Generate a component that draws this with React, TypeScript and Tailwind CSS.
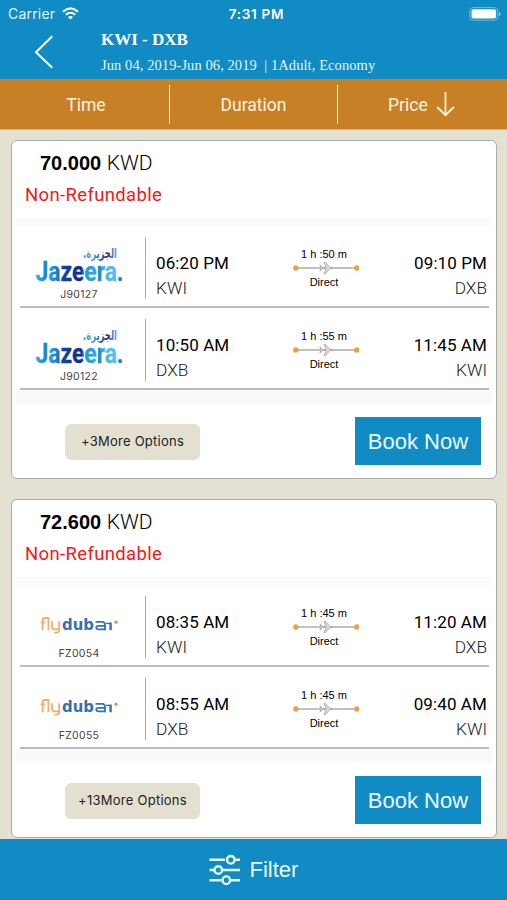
import React from 'react';

type Leg = {
    code: string;
    depTime: string;
    dep: string;
    duration: string;
    arrTime: string;
    arr: string;
};

type Offer = {
    price: string;
    airline: 'jazeera' | 'flydubai';
    options: string;
    legs: Leg[];
};

const offers: Offer[] = [
    {
        price: '70.000',
        airline: 'jazeera',
        options: '+3More Options',
        legs: [
            { code: 'J90127', depTime: '06:20 PM', dep: 'KWI', duration: '1 h :50 m', arrTime: '09:10 PM', arr: 'DXB' },
            { code: 'J90122', depTime: '10:50 AM', dep: 'DXB', duration: '1 h :55 m', arrTime: '11:45 AM', arr: 'KWI' },
        ],
    },
    {
        price: '72.600',
        airline: 'flydubai',
        options: '+13More Options',
        legs: [
            { code: 'FZ0054', depTime: '08:35 AM', dep: 'KWI', duration: '1 h :45 m', arrTime: '11:20 AM', arr: 'DXB' },
            { code: 'FZ0055', depTime: '08:55 AM', dep: 'DXB', duration: '1 h :45 m', arrTime: '09:40 AM', arr: 'KWI' },
        ],
    },
];

const JazeeraLogo = () => (
    <svg width="96" height="52" viewBox="0 0 96 52" className="overflow-visible">
        <defs>
            <linearGradient id="jz" x1="4" x2="91" y1="0" y2="0" gradientUnits="userSpaceOnUse">
                <stop offset="0" stopColor="#35b4e6" />
                <stop offset="0.12" stopColor="#1683cb" />
                <stop offset="0.16" stopColor="#2a9fdb" />
                <stop offset="0.27" stopColor="#1c6fc0" />
                <stop offset="0.3" stopColor="#11449f" />
                <stop offset="0.52" stopColor="#0f2c92" />
                <stop offset="0.55" stopColor="#2196d5" />
                <stop offset="0.68" stopColor="#34a9df" />
                <stop offset="0.72" stopColor="#1783c8" />
                <stop offset="0.79" stopColor="#4cb8e6" />
                <stop offset="0.92" stopColor="#5dc1ea" />
                <stop offset="0.95" stopColor="#1585c9" />
            </linearGradient>
            <linearGradient id="jzAr" x1="51" x2="85" y1="0" y2="0" gradientUnits="userSpaceOnUse">
                <stop offset="0" stopColor="#2c86cd" />
                <stop offset="0.25" stopColor="#55b6e4" />
                <stop offset="0.5" stopColor="#2a5fb0" />
                <stop offset="0.72" stopColor="#2b2f86" />
                <stop offset="1" stopColor="#5fb2e2" />
            </linearGradient>
        </defs>
        <text
            x="85"
            y="22.5"
            textLength="34"
            lengthAdjust="spacingAndGlyphs"
            direction="rtl"
            className="font-['DejaVu_Sans',sans-serif] text-[13.5px] font-bold"
            fill="url(#jzAr)"
        >
            الجزيرة.
        </text>
        <text
            x="3.5"
            y="45.5"
            textLength="88"
            lengthAdjust="spacingAndGlyphs"
            className="font-['Roboto',sans-serif] text-[28.5px] font-bold"
            fill="url(#jz)"
            stroke="url(#jz)"
            strokeWidth="0.3"
        >
            Jazeera.
        </text>
    </svg>
);

const FlydubaiLogo = () => (
    <svg width="96" height="52" viewBox="0 0 96 52" className="overflow-visible">
        <g fill="none" strokeWidth="1.8" stroke="#f5ac68">
            <path d="M10.6 36.2V26.4Q10.6 24 13 24H16.4V36.2M8.6 28.4h4.6" />
            <path d="M20 27.2v5.4Q20 35.3 22.5 35.3H27.2M27.2 27.2v8.9Q27.2 38.6 24.4 38.6H22.4" />
        </g>
        <text
            x="30"
            y="36.2"
            textLength="32"
            lengthAdjust="spacingAndGlyphs"
            className="font-['DejaVu_Sans',sans-serif] text-[16.5px] font-bold"
            fill="#3572ae"
        >
            dub
        </text>
        <g fill="none" stroke="#3572ae">
            <path d="M63.5 27.9h6.7Q73 27.9 73 30.8V36.2" strokeWidth="1.8" />
            <path d="M73 31.9h-6.5Q64.2 31.9 64.2 33.6q0 1.7 2.3 1.7H73" strokeWidth="1.7" />
            <path d="M78.6 28.6v7.6" strokeWidth="2.4" />
            <path d="M74 29.4h4.8" strokeWidth="1.4" />
        </g>
        <circle cx="84" cy="28.2" r="1.6" fill="#ef8a2e" />
    </svg>
);

const RouteLine = () => (
    <svg width="66" height="14" viewBox="0 0 66 14" className="block">
        <path d="M3 7h60" stroke="#adadad" strokeWidth="1.3" />
        <path
            d="M27 3.8l2.2 2.6h3.9L31 1.4h1.4l4.5 5h2.2q1.8.6 0 1.2h-2.2l-4.5 5H31l2.1-5h-3.9L27 10.2l.7-3.2z"
            fill="#dcdcdc"
            stroke="#a8a8a8"
            strokeWidth="0.9"
            strokeLinejoin="round"
        />
        <circle cx="2.8" cy="7" r="2.7" fill="#eaa23c" />
        <circle cx="63.8" cy="7" r="2.7" fill="#eaa23c" />
    </svg>
);

const LegRow: React.FC<{ leg: Leg; airline: Offer['airline'] }> = ({ leg, airline }) => (
    <div className="ml-2 mr-[7px] flex h-[82px] border-b-2 border-[#bcbcbc] font-['Roboto',sans-serif] text-black">
        <div className="w-[125px] shrink-0 pt-[9px]">
            <div className="ml-[12px] h-[53px]">{airline === 'jazeera' ? <JazeeraLogo /> : <FlydubaiLogo />}</div>
            <p className="w-[118px] text-center font-['Inter',sans-serif] text-[10.5px] leading-[14px] tracking-[0.3px] text-[#444]">
                {leg.code}
            </p>
        </div>
        <div className="mt-[11px] h-[62px] w-px shrink-0 bg-[#a9a9a9]" />
        <div className="ml-[10px] w-[137px] pt-[25px]">
            <p className="text-[17px] leading-[24px] tracking-[0.1px]">{leg.depTime}</p>
            <p className="text-[17.3px] font-light leading-[26px] text-[#222]">{leg.dep}</p>
        </div>
        <div className="w-[66px] pt-[21px] text-center font-['Liberation_Sans',sans-serif] text-[11px] leading-[14px]">
            <p className="-ml-1">{leg.duration}</p>
            <RouteLine />
            <p className="-ml-1">Direct</p>
        </div>
        <div className="flex-1 pr-[2px] pt-[25px] text-right">
            <p className="text-[17px] leading-[24px] tracking-[0.1px]">{leg.arrTime}</p>
            <p className="text-[17.3px] font-light leading-[26px] text-[#222]">{leg.arr}</p>
        </div>
    </div>
);

const OfferCard: React.FC<{ offer: Offer }> = ({ offer }) => (
    <div className="h-[339px] rounded-[6px] border border-[#a9aca8] bg-white">
        <p className="pl-[28px] pt-[10px] font-['Liberation_Sans',sans-serif] text-[20px] leading-[24px] text-black">
            <span className="font-bold">{offer.price}</span>{' '}
            <span className="font-['Roboto',sans-serif] text-[21px] font-light">KWD</span>
        </p>
        <p className="mt-[8px] pl-[13px] font-['Roboto',sans-serif] text-[18.5px] leading-[24px] tracking-[0.35px] text-[#fa1414]">
            Non-Refundable
        </p>
        <div className="mx-1 mt-[11px] h-[8px] bg-[#fafafa]" />
        {offer.legs.map((leg) => (
            <LegRow key={leg.code} leg={leg} airline={offer.airline} />
        ))}
        <div className="mx-1 h-[14px] bg-[#fafafa]" />
        <div className="flex items-center justify-between pl-[53px] pr-[15px] pt-[13px]">
            <button className="mt-px h-[36px] w-[135px] rounded-[6px] bg-[#e4e0d1] font-['Inter',sans-serif] text-[13px] tracking-[0.25px] text-[#222]">
                {offer.options}
            </button>
            <button className="h-[48px] w-[126px] bg-[#108bc3] font-['Liberation_Sans',sans-serif] text-[22px] text-[#eaf8ff]">
                Book Now
            </button>
        </div>
    </div>
);

const Header = () => (
    <header className="h-[79px] bg-[#108bc3] text-white">
        <div className="flex h-[27px] items-center justify-between pl-2 pr-[6px] font-['Inter',sans-serif] text-[13.5px]">
            <div className="flex w-[90px] items-center gap-[7px]">
                <span className="text-[14px] tracking-[0.2px] text-[#e6f5fc]">Carrier</span>
                <svg width="17" height="13" viewBox="0 0 17 13" fill="none" stroke="#fff" strokeWidth="2.1">
                    <path d="M1 4.7Q8.5-2.1 16 4.7" />
                    <path d="M3.8 7.8q4.7-4.1 9.4 0" />
                    <path d="M8.5 12.4L6 9.9q2.5-2 5 0z" fill="#fff" stroke="none" />
                </svg>
            </div>
            <span className="pl-1 pt-px font-semibold tracking-[0.7px]">7:31 PM</span>
            <div className="flex w-[90px] justify-end">
                <svg width="32" height="14" viewBox="0 0 32 14">
                    <rect x="0.8" y="0.6" width="28" height="12.6" rx="3.4" fill="none" stroke="#75bddd" />
                    <rect x="2.5" y="2.3" width="24.6" height="9.2" rx="2" fill="#fff" />
                    <path d="M30 4.8q1.6.6 1.6 2.2T30 9.2z" fill="#8cc9e4" />
                </svg>
            </div>
        </div>
        <div className="flex">
            <svg width="20" height="35" viewBox="0 0 20 35" className="ml-[34px] mt-[8px]" fill="none" stroke="#fff" strokeWidth="2">
                <path d="M18.3 1.2L2 17.2l16.3 15.6" />
            </svg>
            <div className="ml-[47px] pt-px font-['Liberation_Serif',serif]">
                <h1 className="text-[17px] font-bold leading-[24px]">KWI - DXB</h1>
                <p className="mt-px whitespace-pre text-[14.5px] leading-[25px] tracking-[0.08px] text-[#e3f4fb]">
                    Jun 04, 2019-Jun 06, 2019  | 1Adult, Economy
                </p>
            </div>
        </div>
    </header>
);

const SortBar = () => (
    <div className="flex h-[51px] items-center border-b border-[#d9ae78] bg-[#c78026] font-['Roboto',sans-serif] text-[17.5px] leading-[26px] text-[#fff3e2]">
        <div className="w-[169px] pl-[3px] pt-px text-center">Time</div>
        <div className="h-[39px] w-px bg-[#fff8ee]" />
        <div className="w-[167px] pt-px text-center">Duration</div>
        <div className="h-[39px] w-px bg-[#fff8ee]" />
        <div className="flex flex-1 items-center pl-[50px]">
            <span className="pt-px">Price</span>
            <svg width="19" height="26" viewBox="0 0 19 26" className="ml-[8px]" fill="none" stroke="#fff3e2" strokeWidth="1.8">
                <path d="M9.5 1v23M1.2 16l8.3 8.2 8.3-8.2" />
            </svg>
        </div>
    </div>
);

const App: React.FC = () => {
    return (
        <div className="flex h-[900px] w-[507px] flex-col overflow-hidden bg-[#e4e0d2]">
            <Header />
            <SortBar />
            <main className="flex h-[709px] shrink-0 flex-col gap-5 pl-[11px] pr-[10px] pt-[10px]">
                {offers.map((offer) => (
                    <OfferCard key={offer.price} offer={offer} />
                ))}
            </main>
            <footer className="flex flex-1 items-center justify-center bg-[#108bc3] font-['Liberation_Sans',sans-serif] text-[22px] text-[#eaf8ff]">
                <svg width="32" height="32" viewBox="0 0 32 32" className="mr-[9px]" fill="none" stroke="#eaf8ff" strokeWidth="2.4">
                    <path d="M0.5 5.8h15.5M26.5 5.8H31M0.5 16H5M14 16h17M0.5 26.2H12M22 26.2h9" />
                    <circle cx="21.8" cy="5.8" r="3.8" />
                    <circle cx="9.3" cy="16" r="3.8" />
                    <circle cx="17.3" cy="26.2" r="3.8" />
                </svg>
                Filter
            </footer>
        </div>
    );
};

export default App;
